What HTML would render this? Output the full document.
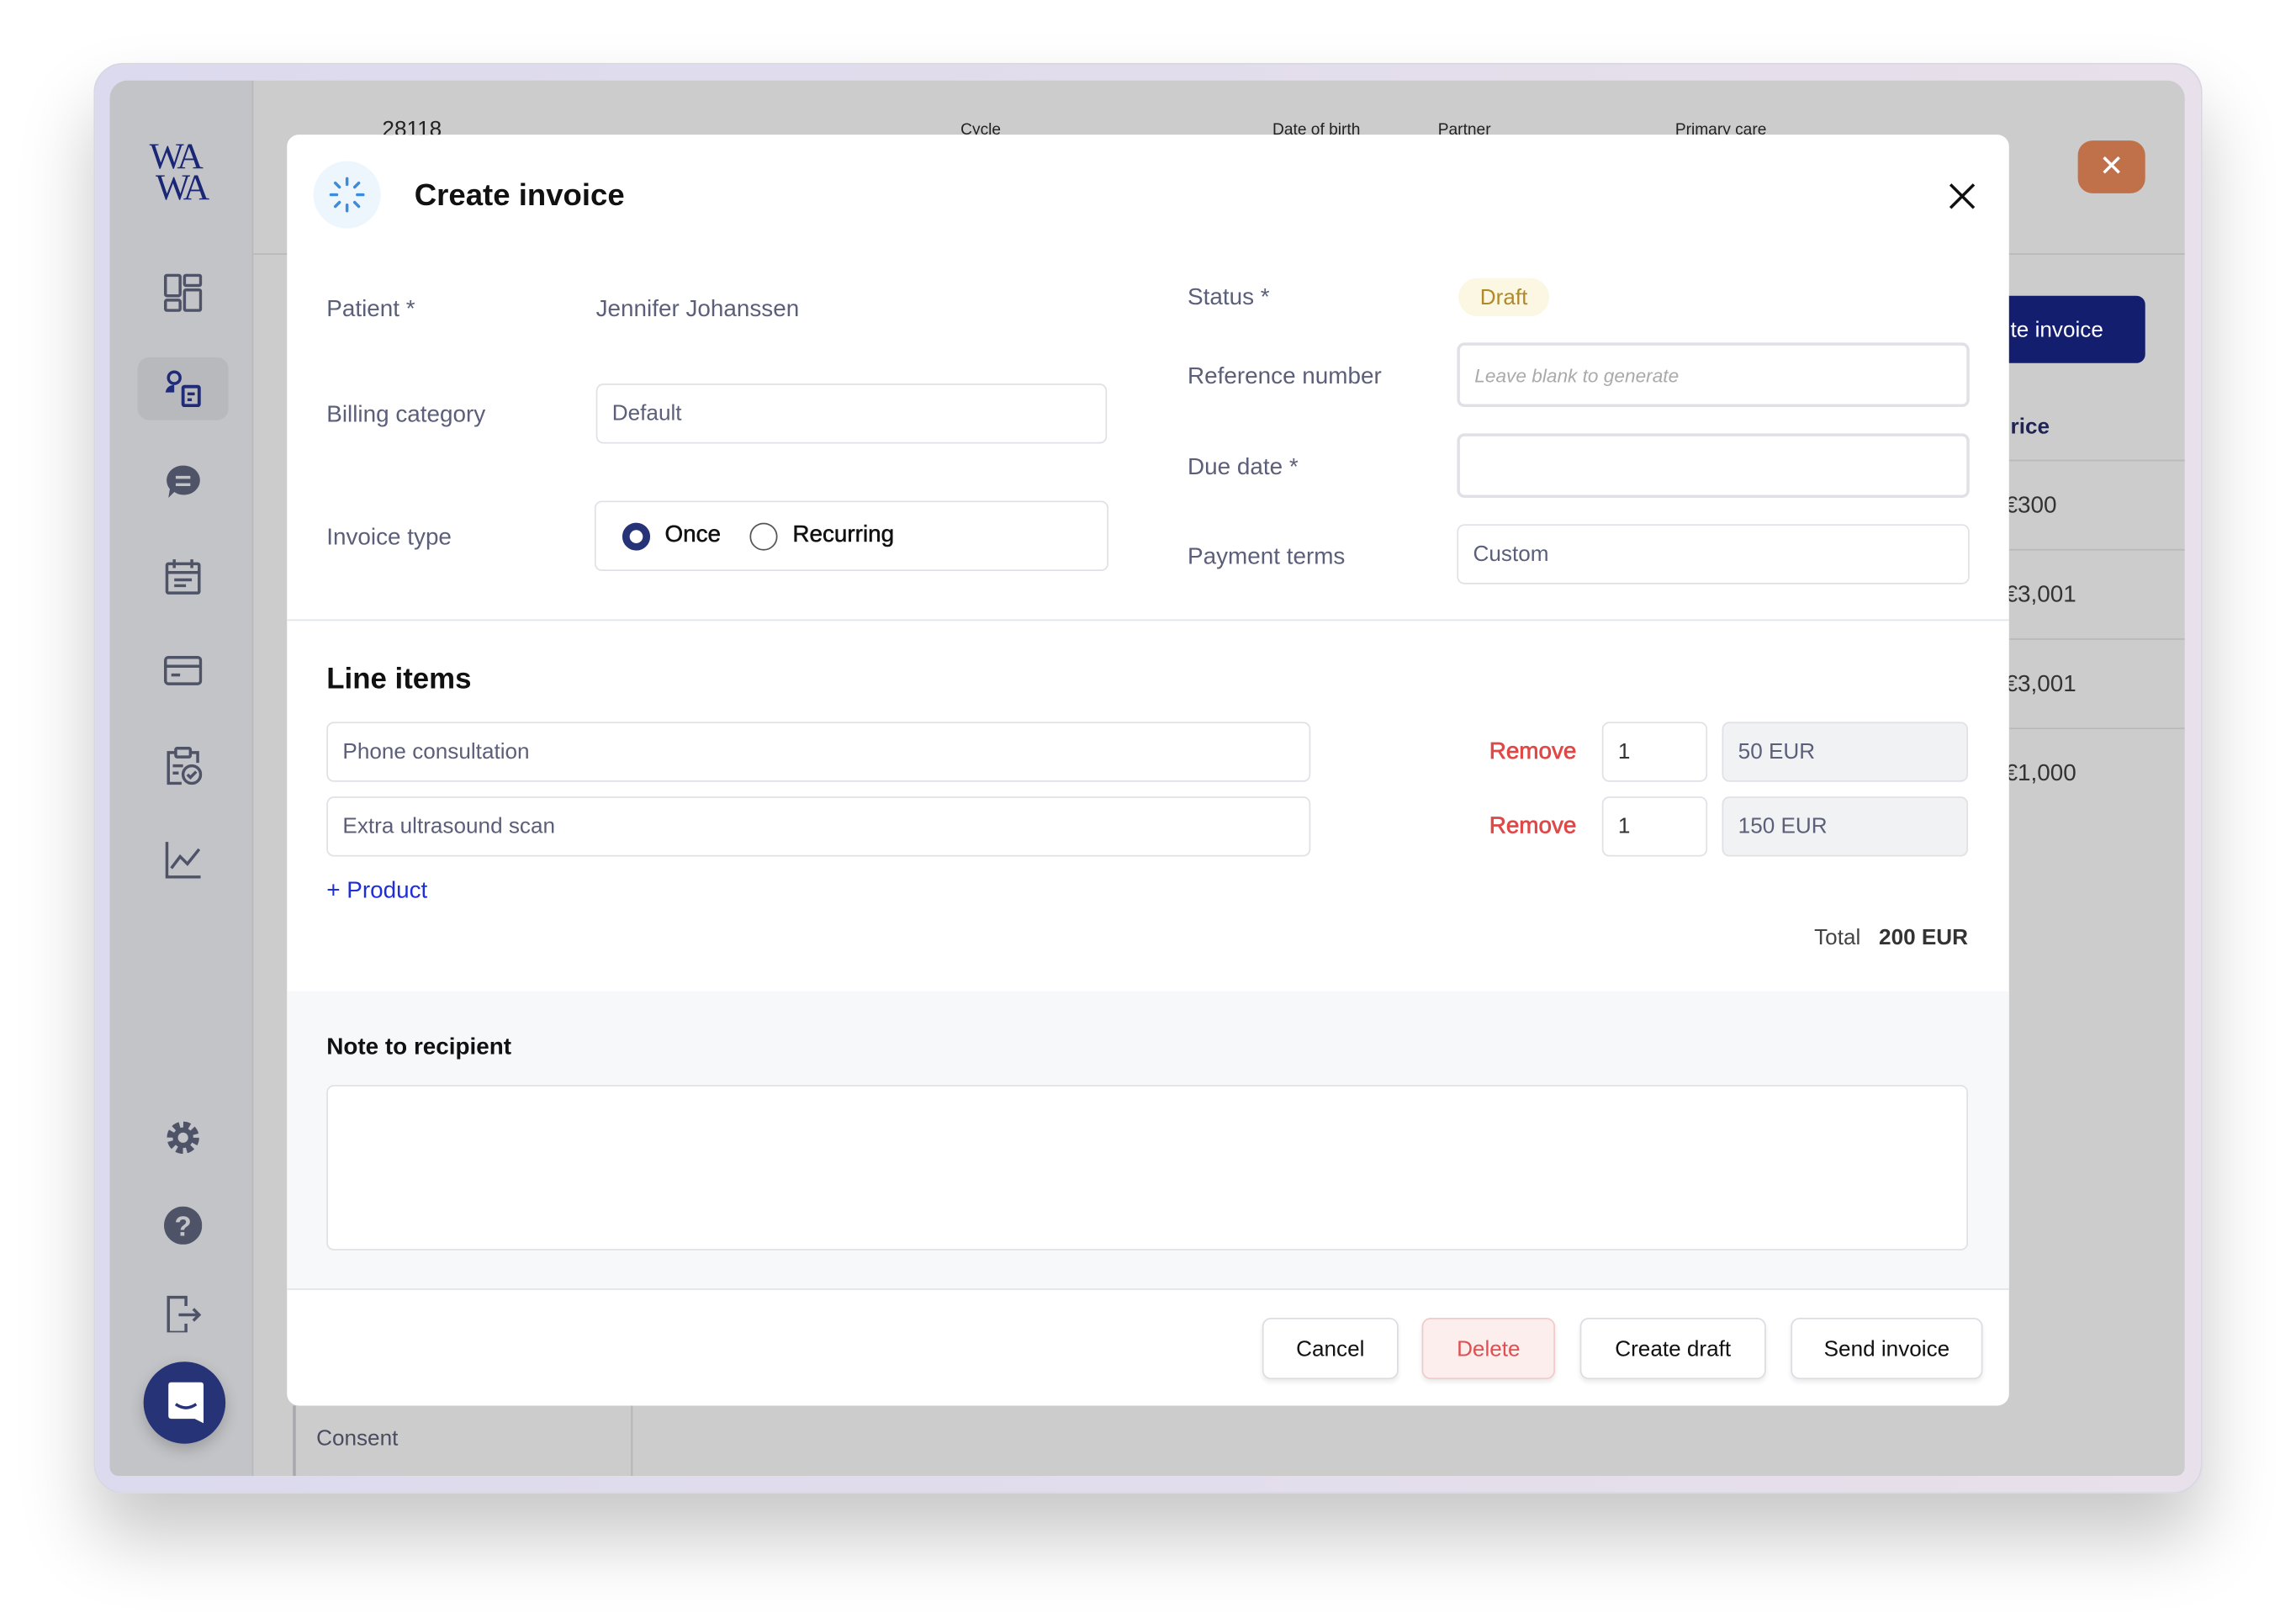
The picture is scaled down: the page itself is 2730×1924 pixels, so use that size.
<!DOCTYPE html>
<html><head><meta charset="utf-8"><style>
*{box-sizing:border-box;margin:0;padding:0}
html,body{width:2730px;height:1924px;overflow:hidden;background:#fff;font-family:"Liberation Sans",sans-serif}
#s{position:absolute;left:0;top:0;width:1568px;height:1105px;transform:scale(1.7411);transform-origin:0 0}
.a{position:absolute}
.frame{left:64px;top:43px;width:1440px;height:977px;border-radius:20px;background:linear-gradient(90deg,#dcdaee,#e8e0ea);border:1px solid #d8d6e2;box-shadow:0 30px 50px rgba(0,0,0,.22)}
.app{left:75px;top:55px;width:1417px;height:953px;background:#cccccc;border-radius:12px 12px 6px 6px;overflow:hidden}
.side{left:0;top:0;width:98px;height:953px;background:#c3c4c7;border-right:1px solid #b8b8bc}
.t{position:absolute;white-space:nowrap}
.modal{left:196px;top:92px;width:1176px;height:868px;background:#fff;border-radius:8px;overflow:hidden}
.lbl{color:#5b5f7a;font-size:16px}
.inp{position:absolute;border:1.5px solid #e0e1e6;border-radius:5px;background:#fff;font-size:15px;color:#5b5f7a;padding-left:10px;display:flex;align-items:center}
.btn{position:absolute;top:808px;height:42px;border:1px solid #dcdde2;border-radius:6px;background:#fff;font-size:15px;color:#111;display:flex;align-items:center;justify-content:center;box-shadow:0 2px 3px rgba(0,0,0,.08)}
.ic{position:absolute;left:112px;width:26px;height:26px}
</style></head><body><div id="s">
<div class="a frame"></div>
<div class="a app">
 <div class="a side"></div>
 <div class="a" style="left:98px;top:118px;width:1319px;height:1px;background:#b9b9b9"></div>
 <div class="t" style="left:186px;top:25px;font-size:15px;color:#222">28118</div>
 <div class="t" style="left:581px;top:28px;font-size:11px;color:#222">Cycle</div>
 <div class="t" style="left:794px;top:28px;font-size:11px;color:#222">Date of birth</div>
 <div class="t" style="left:907px;top:28px;font-size:11px;color:#222">Partner</div>
 <div class="t" style="left:1069px;top:28px;font-size:11px;color:#222">Primary care</div>
 <div class="a" style="left:1344px;top:41px;width:46px;height:36px;border-radius:10px;background:#c0714a;color:#fff;font-size:20px;text-align:center;line-height:36px">✕</div>
 <div class="a" style="left:1280px;top:147px;width:110px;height:46px;border-radius:6px;background:#141e6e;color:#fff;font-size:15px;line-height:48px;padding-left:18px">te invoice</div>
 <div class="t" style="left:1298px;top:228px;font-size:15px;font-weight:bold;color:#1f2454">rice</div>
 <div class="a" style="left:1280px;top:259px;width:137px;height:1px;background:#b9b9b9"></div>
 <div class="t" style="left:1294px;top:282px;font-size:16px;color:#333">€300</div>
 <div class="a" style="left:1280px;top:320px;width:137px;height:1px;background:#b9b9b9"></div>
 <div class="t" style="left:1294px;top:343px;font-size:16px;color:#333">€3,001</div>
 <div class="a" style="left:1280px;top:381px;width:137px;height:1px;background:#b9b9b9"></div>
 <div class="t" style="left:1294px;top:404px;font-size:16px;color:#333">€3,001</div>
 <div class="a" style="left:1280px;top:442px;width:137px;height:1px;background:#b9b9b9"></div>
 <div class="t" style="left:1294px;top:465px;font-size:16px;color:#333">€1,000</div>
 <div class="a" style="left:125px;top:905px;width:232px;height:48px;border-left:2px solid #a8a8ad;border-right:1px solid #b5b5b5"></div>
 <div class="t" style="left:141px;top:919px;font-size:15px;color:#4a4d62">Consent</div>
</div>
<!-- sidebar -->
<div class="t" style="left:102px;top:97px;font-family:'Liberation Serif',serif;font-size:25px;line-height:21px;color:#1a2676;letter-spacing:-2px">WA<br>&nbsp;WA</div>
<svg class="ic" style="top:187px" viewBox="0 0 26 26" fill="none" stroke="#4e5368" stroke-width="2"><rect x="1" y="1" width="10" height="14" rx="1"/><rect x="1" y="18" width="10" height="7" rx="1"/><rect x="14" y="1" width="11" height="7" rx="1"/><rect x="14" y="11" width="11" height="14" rx="1"/></svg>
<div class="a" style="left:94px;top:244px;width:62px;height:43px;border-radius:8px;background:#b8b9bd"></div>
<svg class="ic" style="top:252px" viewBox="0 0 26 26"><circle cx="7" cy="6" r="4" fill="none" stroke="#1f2a78" stroke-width="2"/><path d="M1 16q1-5 6-5v5z" fill="#1f2a78"/><rect x="13" y="12" width="11" height="13" rx="1" fill="none" stroke="#1f2a78" stroke-width="2.2"/><path d="M16 17h5M16 21h3" stroke="#1f2a78" stroke-width="2"/></svg>
<svg class="ic" style="top:316px" viewBox="0 0 26 26"><path d="M13 2a11 10 0 1 1-6 18l-4 4 1-6A11 10 0 0 1 13 2z" fill="#4e5368"/><path d="M8 10h10M8 15h10" stroke="#c3c4c7" stroke-width="2"/></svg>
<svg class="ic" style="top:381px" viewBox="0 0 26 26" fill="none" stroke="#4e5368" stroke-width="2"><rect x="2" y="4" width="22" height="20" rx="1"/><path d="M2 10h22M7 1v6M19 1v6M7 15h12M7 19h8"/></svg>
<svg class="ic" style="top:445px" viewBox="0 0 26 26" fill="none" stroke="#4e5368" stroke-width="2"><rect x="1" y="4" width="24" height="18" rx="2"/><path d="M1 10h24M5 16h6"/></svg>
<svg class="ic" style="top:510px" viewBox="0 0 26 26" fill="none" stroke="#4e5368" stroke-width="2"><path d="M8 4H3v21h9M18 4h5v7"/><rect x="8" y="1" width="10" height="6" rx="1"/><path d="M6 13h7M6 18h4"/><circle cx="19" cy="19" r="6"/><path d="M16 19l2 2 4-4"/></svg>
<svg class="ic" style="top:574px" viewBox="0 0 26 26" fill="none" stroke="#4e5368" stroke-width="2"><path d="M2 1v24h23M5 19l6-8 5 5 8-10"/></svg>
<svg class="ic" style="top:764px" viewBox="0 0 26 26"><circle cx="13" cy="13" r="8" fill="none" stroke="#4e5368" stroke-width="6" stroke-dasharray="4 2.3"/><circle cx="13" cy="13" r="7" fill="#4e5368"/><circle cx="13" cy="13" r="3.5" fill="#c3c4c7"/></svg>
<svg class="ic" style="top:824px" viewBox="0 0 26 26"><circle cx="13" cy="13" r="13" fill="#4e5368"/><text x="13" y="20" font-size="19" font-weight="bold" text-anchor="middle" fill="#c3c4c7" font-family="Liberation Sans">?</text></svg>
<svg class="ic" style="top:884px" viewBox="0 0 26 26" fill="none" stroke="#4e5368" stroke-width="2"><path d="M15 8V2H3v24h12v-6M10 14h14M20 10l4 4-4 4"/></svg>
<div class="a" style="left:98px;top:930px;width:56px;height:56px;border-radius:50%;background:#263377;box-shadow:0 4px 10px rgba(0,0,0,.2)"></div>
<svg class="a" style="left:114px;top:944px" width="26" height="28" viewBox="0 0 26 28"><path d="M3 0h20q2 0 2 2v26l-6-3H3q-2 0-2-2V2q0-2 2-2z" fill="#fff"/><path d="M6 15q7 5 14 0" stroke="#263377" stroke-width="2" fill="none"/></svg>
<!-- modal -->
<div class="a modal">
 <div class="a" style="left:18px;top:18px;width:46px;height:46px;border-radius:50%;background:#eef6fd"></div>
 <svg class="a" style="left:28px;top:28px" width="26" height="26" viewBox="0 0 26 26" stroke="#3b8ddb" stroke-width="2" stroke-linecap="round"><path d="M13 2v4M13 20v4M2 13h4M20 13h4M5 5l2.8 2.8M18.2 18.2 21 21M5 21l2.8-2.8M18.2 7.8 21 5"/></svg>
 <div class="t" style="left:87px;top:30px;font-size:21px;font-weight:bold;color:#111">Create invoice</div>
 <svg class="a" style="left:1135px;top:33px" width="18" height="18" viewBox="0 0 18 18" stroke="#111" stroke-width="2"><path d="M1 1l16 16M17 1 1 17"/></svg>
 <div class="t lbl" style="left:27px;top:111px">Patient *</div>
 <div class="t" style="left:211px;top:111px;font-size:16px;color:#5b5f7a">Jennifer Johanssen</div>
 <div class="t lbl" style="left:27px;top:183px">Billing category</div>
 <div class="inp" style="left:211px;top:170px;width:349px;height:41px">Default</div>
 <div class="t lbl" style="left:27px;top:267px">Invoice type</div>
 <div class="inp" style="left:210px;top:250px;width:351px;height:48px;padding-left:18px;font-size:16px;color:#111;font-weight:500">
  <span style="width:19px;height:19px;border-radius:50%;border:5.5px solid #263377;background:#fff;display:inline-block;margin-right:10px"></span><span style="-webkit-text-stroke:0.3px #111">Once</span>
  <span style="width:19px;height:19px;border-radius:50%;border:1.5px solid #555;display:inline-block;margin:0 10px 0 20px"></span><span style="-webkit-text-stroke:0.3px #111">Recurring</span></div>
 <div class="t lbl" style="left:615px;top:103px">Status *</div>
 <div class="a" style="left:800px;top:98px;width:62px;height:26px;border-radius:13px;background:#fcf7e2;color:#b08a2a;font-size:15px;text-align:center;line-height:28px">Draft</div>
 <div class="t lbl" style="left:615px;top:157px">Reference number</div>
 <div class="inp" style="left:799px;top:142px;width:350px;height:44px;border-width:2px;font-style:italic;font-size:13px;color:#aaa">Leave blank to generate</div>
 <div class="t lbl" style="left:615px;top:219px">Due date *</div>
 <div class="inp" style="left:799px;top:204px;width:350px;height:44px;border-width:2px"></div>
 <div class="t lbl" style="left:615px;top:280px">Payment terms</div>
 <div class="inp" style="left:799px;top:266px;width:350px;height:41px">Custom</div>
 <div class="a" style="left:0;top:331px;width:1176px;height:1px;background:#e3e4e8"></div>
 <div class="t" style="left:27px;top:361px;font-size:20px;font-weight:bold;color:#111">Line items</div>
 <div class="inp" style="left:27px;top:401px;width:672px;height:41px">Phone consultation</div>
 <div class="inp" style="left:27px;top:452px;width:672px;height:41px">Extra ultrasound scan</div>
 <div class="t" style="left:821px;top:413px;font-size:16px;color:#e04848;-webkit-text-stroke:0.4px #e04848">Remove</div>
 <div class="t" style="left:821px;top:464px;font-size:16px;color:#e04848;-webkit-text-stroke:0.4px #e04848">Remove</div>
 <div class="inp" style="left:898px;top:401px;width:72px;height:41px;color:#333">1</div>
 <div class="inp" style="left:898px;top:452px;width:72px;height:41px;color:#333">1</div>
 <div class="inp" style="left:980px;top:401px;width:168px;height:41px;background:#f1f2f4">50 EUR</div>
 <div class="inp" style="left:980px;top:452px;width:168px;height:41px;background:#f1f2f4">150 EUR</div>
 <div class="t" style="left:27px;top:508px;font-size:16px;color:#1d2fd8">+ Product</div>
 <div class="t" style="right:28px;top:540px;font-size:15px;color:#444">Total &nbsp; <b style="color:#333">200 EUR</b></div>
 <div class="a" style="left:0;top:585px;width:1176px;height:204px;background:#f7f8fa;border-bottom:1px solid #e3e4e8"></div>
 <div class="t" style="left:27px;top:615px;font-size:16px;font-weight:bold;color:#111">Note to recipient</div>
 <div class="inp" style="left:27px;top:649px;width:1121px;height:113px"></div>
 <div class="btn" style="left:666px;width:93px">Cancel</div>
 <div class="btn" style="left:775px;width:91px;background:#fdeeee;border-color:#f3c9c9;color:#e05050">Delete</div>
 <div class="btn" style="left:883px;width:127px">Create draft</div>
 <div class="btn" style="left:1027px;width:131px">Send invoice</div>
</div>
</div></body></html>
